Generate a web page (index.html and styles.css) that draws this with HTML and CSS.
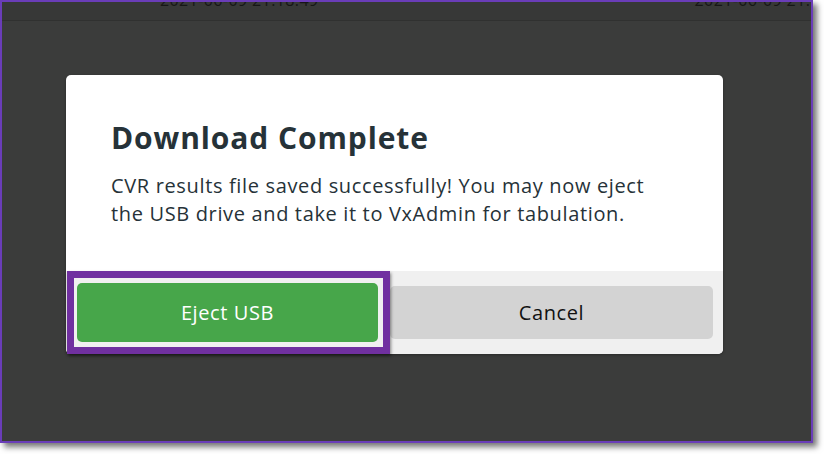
FILE: index.html
```html
<!DOCTYPE html>
<html lang="en">
<head>
<meta charset="utf-8">
<title>Download Complete</title>
<link rel="stylesheet" href="styles.css">
</head>
<body>
<div class="frame">
  <div class="screen">
    <div class="hdr">
      <span class="ts ts-left">2021-06-09 21:18:49</span>
      <span class="ts ts-right">2021-06-09 21:18:49</span>
    </div>
    <div class="stage">
      <div class="modal">
        <div class="modal-body">
          <h1 class="title">Download Complete</h1>
          <p class="msg">CVR results file saved successfully! You may now eject the USB drive and take it to VxAdmin for tabulation.</p>
        </div>
        <div class="actions">
          <button class="btn btn-primary">Eject USB</button>
          <button class="btn btn-secondary">Cancel</button>
          <div class="focus-ring"></div>
        </div>
      </div>
    </div>
  </div>
</div>
</body>
</html>
```
FILE: styles.css
```css
html, body {
  margin: 0;
  padding: 0;
  background: #ffffff;
}
body {
  width: 824px;
  height: 454px;
  overflow: hidden;
  font-family: "Open Sans", "Noto Sans", sans-serif;
}
.frame {
  width: 813px;
  height: 443px;
  box-sizing: border-box;
  border: 2px solid #6a3db8;
  box-shadow: 4px 4px 6px rgba(0, 0, 0, 0.55);
  overflow: hidden;
}
.screen {
  width: 100%;
  height: 100%;
  background: #3b3c3b;
  display: flex;
  flex-direction: column;
}
.hdr {
  height: 18px;
  flex: none;
  background: #373837;
  border-bottom: 1px solid #303130;
  overflow: hidden;
  display: flex;
  white-space: nowrap;
}
.ts {
  font-size: 16px;
  line-height: 16px;
  margin-top: -10px;
  color: #161616;
  letter-spacing: 0.4px;
}
.ts-left {
  margin-left: 158px;
}
.ts-right {
  margin-left: 376px;
}
.stage {
  flex: 1;
  padding: 54px 0 0 64px;
}
.modal {
  width: 657px;
  background: #ffffff;
  border-radius: 5px;
  box-shadow: 0 1px 3px rgba(0, 0, 0, 0.3);
}
.modal-body {
  padding: 45px 45px 43px 45px;
  color: #263238;
}
.title {
  margin: 0 0 16px 0;
  font-size: 30px;
  line-height: 36px;
  font-weight: 700;
  letter-spacing: 0.9px;
}
.msg {
  margin: 0;
  font-size: 20px;
  line-height: 28px;
  letter-spacing: 0.65px;
  width: 545px;
}
.actions {
  position: relative;
  height: 83px;
  background: #f0f0f0;
  border-radius: 0 0 5px 5px;
  display: flex;
  align-items: center;
  gap: 12px;
  padding: 0 10px 0 11px;
}
.btn {
  border: none;
  border-radius: 5px;
  font-family: inherit;
  font-size: 20px;
  letter-spacing: 0.6px;
  padding: 0;
}
.btn-primary {
  width: 301px;
  height: 59px;
  background: #47a64a;
  color: #ffffff;
}
.btn-secondary {
  flex: 1;
  height: 53px;
  background: #d3d3d3;
  color: #111111;
}
.focus-ring {
  position: absolute;
  left: 1px;
  top: 0;
  width: 323px;
  height: 83px;
  box-sizing: border-box;
  border: 7px solid #7030a0;
  box-shadow: 1px 2px 3px rgba(0, 0, 0, 0.45);
}
```
